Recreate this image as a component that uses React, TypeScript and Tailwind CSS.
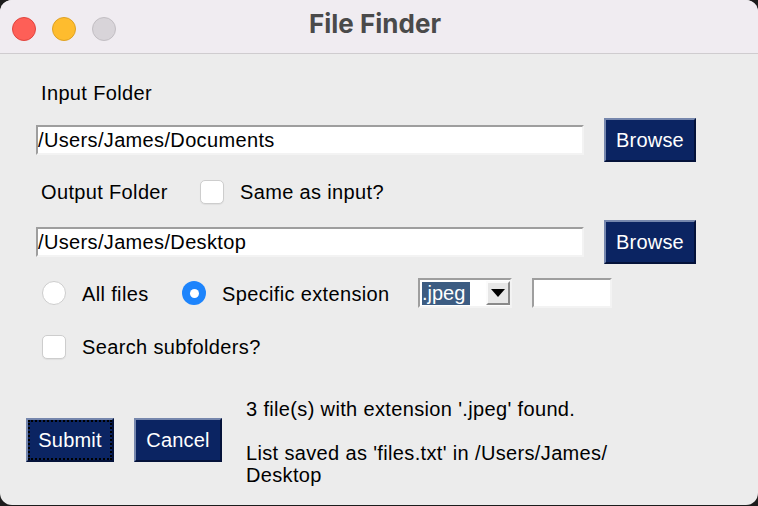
import React from 'react';

const font = { fontFamily: '"Liberation Sans", Arial, sans-serif' };

const Entry: React.FC<{ value?: string; className?: string }> = ({ value, className }) => (
  <div
    className={`flex items-center bg-white border-2 border-t-[#9e9e9e] border-l-[#9e9e9e] border-b-[#f3f3f3] border-r-[#f3f3f3] ${className ?? ''}`}
  >
    {value && <span className="text-[20px] leading-[22px] text-black">{value}</span>}
  </div>
);

const TkButton: React.FC<{ label: string; focused?: boolean; className?: string }> = ({ label, focused, className }) => (
  <button
    className={`flex items-center justify-center bg-[#0b2462] text-white text-[20px] leading-[22px] tracking-[0.2px] border-2 border-t-[#7687ad] border-l-[#7687ad] border-b-[#04123a] border-r-[#04123a] ${
      focused ? 'outline-2 outline-dotted outline-black outline-offset-[-4px]' : ''
    } ${className ?? ''}`}
  >
    {label}
  </button>
);

const Checkbox: React.FC = () => (
  <div className="w-[24px] h-[24px] rounded-[5px] bg-white border border-[#cdcdcd] shadow-[0_1px_1px_rgba(0,0,0,0.06)]" />
);

const Radio: React.FC<{ checked?: boolean }> = ({ checked }) =>
  checked ? (
    <div className="w-[24px] h-[24px] rounded-full bg-[#1d84fc] flex items-center justify-center">
      <div className="w-[9px] h-[9px] rounded-full bg-white" />
    </div>
  ) : (
    <div className="w-[24px] h-[24px] rounded-full bg-white border border-[#cdcdcd]" />
  );

export default function App() {
  return (
    <div className="w-[758px] h-[506px] bg-[#1c1c1c] overflow-hidden" style={font}>
      <div className="w-[758px] h-[505px] rounded-[12px] overflow-hidden bg-[#ececec] flex flex-col">
        {/* title bar */}
        <div className="h-[54px] shrink-0 bg-[#f0ecf1] border-b border-[#cfcccf] flex items-center relative">
          <div className="flex items-center gap-[16px] pl-[12px] pt-[4px]">
            <div className="w-[24px] h-[24px] rounded-full bg-[#fe5f57] border border-[#e0443e]" />
            <div className="w-[24px] h-[24px] rounded-full bg-[#febc2e] border border-[#dea123]" />
            <div className="w-[24px] h-[24px] rounded-full bg-[#d8d4d9] border border-[#c2bec3]" />
          </div>
          <div
            className="absolute inset-x-0 top-[8px] pr-[8px] text-center text-[26px] leading-[32px] font-bold text-[#4a4a4a]"
            style={{ fontFamily: 'Inter, "Liberation Sans", sans-serif' }}
          >
            File Finder
          </div>
        </div>

        {/* body */}
        <div className="flex flex-col text-black text-[20px] leading-[22px] tracking-[0.35px]">
          <div className="mt-[28px] h-[22px] pl-[41px]">Input Folder</div>

          <div className="mt-[14px] h-[44px] pl-[36px] flex items-center gap-[20px]">
            <Entry value="/Users/James/Documents" className="w-[548px] h-[30px]" />
            <TkButton label="Browse" className="w-[92px] h-[44px]" />
          </div>

          <div className="mt-[18px] h-[24px] flex items-center">
            <span className="pl-[41px] w-[200px]">Output Folder</span>
            <Checkbox />
            <span className="ml-[16px]">Same as input?</span>
          </div>

          <div className="mt-[16px] h-[44px] pl-[36px] flex items-center gap-[20px]">
            <Entry value="/Users/James/Desktop" className="w-[548px] h-[30px]" />
            <TkButton label="Browse" className="w-[92px] h-[44px]" />
          </div>

          <div className="mt-[14px] h-[30px] pl-[42px] flex items-center">
            <Radio />
            <span className="ml-[16px] w-[100px] pt-[2px]">All files</span>
            <Radio checked />
            <span className="ml-[16px] w-[196px] pt-[2px]">Specific extension</span>
            <div className="w-[94px] h-[30px] bg-white border-2 border-t-[#9e9e9e] border-l-[#9e9e9e] border-b-[#f3f3f3] border-r-[#f3f3f3] flex items-center pl-[2px]">
              <span className="h-[23px] w-[48px] bg-[#3c5c82] text-white flex items-center tracking-normal">.jpeg</span>
              <div className="ml-auto w-[24px] h-[24px] bg-[#e7e7e7] border-2 border-t-[#fbfbfb] border-l-[#fbfbfb] border-b-[#8a8a8a] border-r-[#8a8a8a] flex items-center justify-center">
                <svg width="14" height="8" viewBox="0 0 14 8">
                  <path d="M0 0 H14 L7 8 Z" fill="#000" />
                </svg>
              </div>
            </div>
            <Entry className="ml-[20px] w-[80px] h-[30px]" />
          </div>

          <div className="mt-[27px] h-[24px] pl-[42px] flex items-center">
            <Checkbox />
            <span className="ml-[16px]">Search subfolders?</span>
          </div>

          <div className="mt-[39px] flex items-start">
            <TkButton label="Submit" focused className="ml-[26px] mt-[20px] w-[88px] h-[44px]" />
            <TkButton label="Cancel" className="ml-[20px] mt-[20px] w-[88px] h-[44px]" />
            <div className="ml-[24px]">
              <div>3 file(s) with extension '.jpeg' found.</div>
              <div className="h-[22px]" />
              <div>List saved as 'files.txt' in /Users/James/</div>
              <div>Desktop</div>
            </div>
          </div>
        </div>
      </div>
    </div>
  );
}
